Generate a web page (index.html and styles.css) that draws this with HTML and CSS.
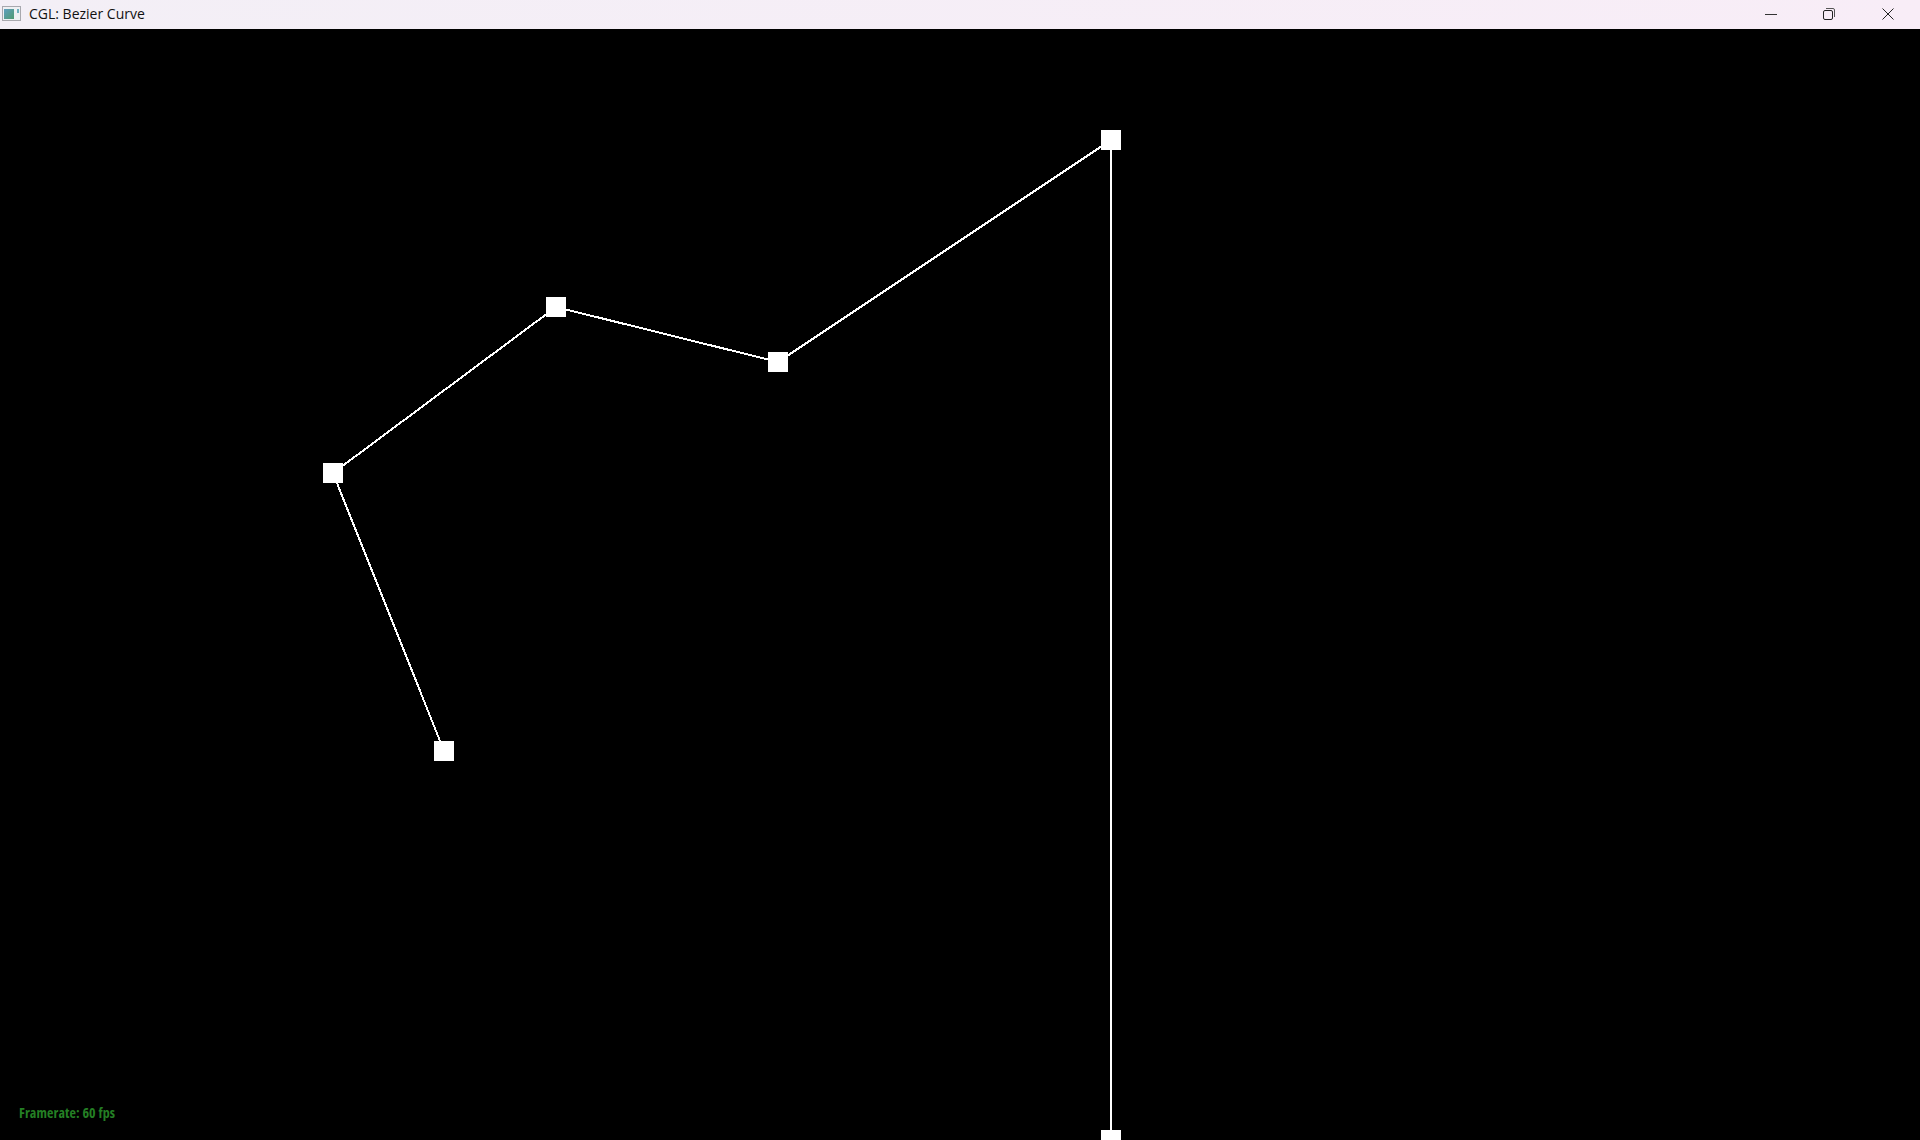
FILE: index.html
```html
<!DOCTYPE html>
<html lang="en">
<head>
    <meta charset="UTF-8">
    <title>CGL: Bezier Curve</title>
    <link rel="stylesheet" href="styles.css">
</head>
<body>
    <header class="titlebar">
        <svg class="app-icon" width="19" height="15" viewBox="0 0 19 15">
            <defs>
                <linearGradient id="appFill" x1="0" y1="0" x2="1" y2="1">
                    <stop offset="0" stop-color="#5f9fc0"/>
                    <stop offset="1" stop-color="#4f9a70"/>
                </linearGradient>
            </defs>
            <rect x="0.5" y="0.5" width="18" height="14" fill="#eef0f3" stroke="#a8a8ae"/>
            <rect x="2" y="3" width="10" height="10" fill="url(#appFill)"/>
            <rect x="15" y="3" width="2" height="4" fill="#6fb0c0"/>
        </svg>
        <span class="title">CGL: Bezier Curve</span>
        <div class="controls">
            <button class="control">
                <svg width="14" height="14" viewBox="0 0 14 14"><path d="M1 7.5H13" stroke="#333" fill="none"/></svg>
            </button>
            <button class="control">
                <svg width="14" height="14" viewBox="0 0 14 14"><rect x="1.5" y="3.5" width="9" height="9" rx="1.5" fill="none" stroke="#222"/><path d="M4 1.5H11Q12.5 1.5 12.5 3V10" fill="none" stroke="#555"/></svg>
            </button>
            <button class="control">
                <svg width="14" height="14" viewBox="0 0 14 14"><path d="M1.5 1.5L12.5 12.5M12.5 1.5L1.5 12.5" stroke="#222" fill="none"/></svg>
            </button>
        </div>
    </header>
    <main class="viewport">
        <!-- control polygon, coordinates are window pixels -->
        <svg class="scene" viewBox="0 29 1920 1111">
            <polyline class="polygon" points="444,751 333,473 556,307 778,362 1111,140 1111,1140"/>
            <rect class="point" x="434" y="741" width="20" height="20"/>
            <rect class="point" x="323" y="463" width="20" height="20"/>
            <rect class="point" x="546" y="297" width="20" height="20"/>
            <rect class="point" x="768" y="352" width="20" height="20"/>
            <rect class="point" x="1101" y="130" width="20" height="20"/>
            <rect class="point" x="1101" y="1130" width="20" height="20"/>
        </svg>
        <p class="framerate">Framerate: 60 fps</p>
    </main>
</body>
</html>
```

FILE: styles.css
```css
html, body {
    margin: 0;
    padding: 0;
    height: 100%;
}
body {
    display: flex;
    flex-direction: column;
    height: 1140px;
    overflow: hidden;
    background-color: #000;
}
.titlebar {
    display: flex;
    align-items: center;
    flex: 0 0 29px;
    box-sizing: border-box;
    padding: 0 0 2px 2px;
    background: linear-gradient(to right, #f3eff6, #f8edf7);
}
.app-icon {
    display: block;
    margin-right: 8px;
}
.title {
    font-family: "Open Sans", "Noto Sans", sans-serif;
    font-size: 14px;
    color: #111;
}
.controls {
    display: flex;
    margin-left: auto;
    padding-right: 3px;
}
.control {
    display: flex;
    align-items: center;
    justify-content: center;
    width: 58.5px;
    height: 27px;
    padding: 0;
    border: none;
    background: none;
}
.viewport {
    position: relative;
    flex: 1;
    background-color: #000;
}
.scene {
    display: block;
    width: 100%;
    height: 100%;
}
.polygon {
    fill: none;
    stroke: #fff;
    stroke-width: 2;
    shape-rendering: crispEdges;
}
.point {
    fill: #fff;
}
.framerate {
    position: absolute;
    left: 19px;
    bottom: 18px;
    margin: 0;
    font-family: "Open Sans", "Noto Sans", sans-serif;
    font-size: 14px;
    font-weight: 700;
    font-stretch: 75%;
    letter-spacing: 0.1px;
    color: #247f24;
}
```
